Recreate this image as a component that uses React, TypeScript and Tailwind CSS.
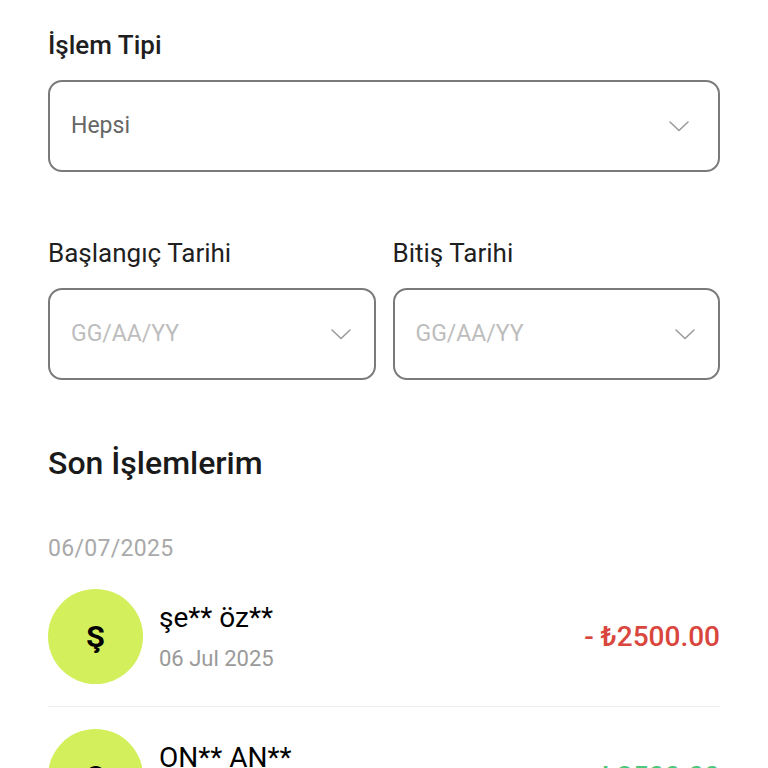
type Tx = {
  initial: string;
  name: string;
  date: string;
  amount: string;
  negative: boolean;
};

const txs: Tx[] = [
  { initial: "Ş", name: "şe** öz**", date: "06 Jul 2025", amount: "- ₺2500.00", negative: true },
  { initial: "O", name: "ON** AN**", date: "06 Jul 2025", amount: "+ ₺2500.00", negative: false },
];

function Chevron() {
  return (
    <svg width="22" height="12" viewBox="0 0 22 12" fill="none" className="shrink-0">
      <path d="M2 2l9 8.5L20 2" stroke="#9b9b9b" strokeWidth="1.6" strokeLinecap="round" strokeLinejoin="round" />
    </svg>
  );
}

function SelectBox({ value, placeholder, wide }: { value: string; placeholder?: boolean; wide?: boolean }) {
  return (
    <div
      className={`flex h-[92px] items-center justify-between rounded-[14px] border-2 border-[#7a7a7a] pl-[21px] ${
        wide ? "pr-[28px]" : "pr-[22px]"
      }`}
    >
      <span className={`text-[23px] ${placeholder ? "text-[#bdbdbd]" : "text-[#666]"}`}>{value}</span>
      <Chevron />
    </div>
  );
}

export default function App() {
  return (
    <div className="h-[768px] overflow-hidden bg-white px-12 pt-[29px] font-['Roboto',sans-serif] text-[#1f1f1f]">
      {/* İşlem tipi */}
      <label className="block text-[26px] font-medium leading-[32px]">İşlem Tipi</label>
      <div className="mt-[19px]">
        <SelectBox value="Hepsi" wide />
      </div>

      {/* Tarih aralığı */}
      <div className="mt-[65px] grid grid-cols-2 gap-[17px]">
        <div>
          <label className="block text-[26px] leading-[32px]">Başlangıç Tarihi</label>
          <div className="mt-[19px]">
            <SelectBox value="GG/AA/YY" placeholder />
          </div>
        </div>
        <div>
          <label className="block text-[26px] leading-[32px]">Bitiş Tarihi</label>
          <div className="mt-[19px]">
            <SelectBox value="GG/AA/YY" placeholder />
          </div>
        </div>
      </div>

      <h2 className="mt-[64px] text-[32px] font-medium leading-[38px] text-[#1a1a1a]">Son İşlemlerim</h2>

      <p className="mt-[53px] text-[23px] leading-[28px] tracking-[0.3px] text-[#a9a9a9]">06/07/2025</p>

      <div className="mt-[26px]">
        {txs.map((tx, i) => (
          <div
            key={i}
            className={`flex items-center ${i === 0 ? "border-b border-[#ececec] pb-[22px]" : "pt-[22px]"}`}
          >
            <div className="flex h-[95px] w-[95px] shrink-0 items-center justify-center rounded-full bg-[#d3ef5b] text-[30px] font-bold text-black">
              {tx.initial}
            </div>
            <div className="ml-[16px] flex-1">
              <p className="text-[28px] leading-[34px] text-black">{tx.name}</p>
              <p className="mt-[10px] text-[22px] leading-[28px] text-[#9a9a9a]">{tx.date}</p>
            </div>
            <p className={`text-[28px] font-medium ${tx.negative ? "text-[#d9463d]" : "text-[#4cc87a]"}`}>
              {tx.amount}
            </p>
          </div>
        ))}
      </div>
    </div>
  );
}
